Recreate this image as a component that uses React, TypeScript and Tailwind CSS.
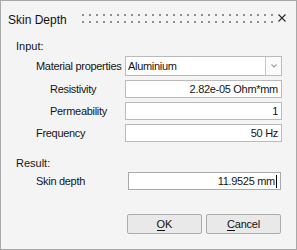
import React from 'react'

const font = "font-['Liberation_Sans',Arial,sans-serif]"

function GripDots() {
  const cols = Array.from({ length: 28 }, (_, i) => i)
  return (
    <svg width="191" height="9" viewBox="0 0 191 9" className="mt-[13px] ml-0 shrink-0">
      {cols.map((i) => (
        <g key={i} fill="#8e8e8e">
          <rect x={i * 7} y={0} width={2} height={2} />
          <rect x={i * 7} y={7} width={2} height={2} />
        </g>
      ))}
    </svg>
  )
}

function CloseIcon() {
  return (
    <svg width="8" height="8" viewBox="0 0 8 8" className="mt-[13px] ml-[5px] shrink-0">
      <path d="M0.5 0.5 L7.5 7.5 M7.5 0.5 L0.5 7.5" stroke="#2b2b2b" strokeWidth="1.1" fill="none" />
    </svg>
  )
}

function Field({ label, indent, value }: { label: string; indent: boolean; value: string }) {
  return (
    <div className="flex items-center h-[18px] mt-[4px]">
      <div className={`w-[109px] ${indent ? 'pl-[34px]' : 'pl-[20px]'} tracking-[-0.3px]`}>{label}</div>
      <div className="w-[157px] h-[18px] bg-white border border-[#bababa] flex items-center justify-end pr-[3px] tracking-[-0.3px]">
        {value}
      </div>
    </div>
  )
}

export default function App() {
  return (
    <div className={`w-[297px] h-[250px] border border-[#a8a8a8] bg-[#f4f4f4] flex flex-col text-[11px] leading-[14px] text-[#141414] ${font}`}>
      {/* title bar */}
      <div className="flex items-start h-[30px] pl-[7px]">
        <span className="w-[74px] mt-[12px] text-[12px] text-[#111]">Skin Depth</span>
        <GripDots />
        <CloseIcon />
      </div>

      <div className="pl-[15px] flex flex-col">
        <div className="mt-[8px] h-[14px]">Input:</div>

        {/* material select */}
        <div className="flex items-center h-[20px] mt-[3px]">
          <div className="w-[109px] pl-[20px] tracking-[-0.3px]">Material properties</div>
          <div className="w-[157px] h-[20px] bg-white border border-[#bababa] flex items-stretch">
            <div className="flex-1 flex items-center pl-[2px] tracking-[-0.3px]">Aluminium</div>
            <div className="w-[16px] border-l border-[#c8c8c8] bg-[#fbfbfb] flex items-center justify-center">
              <svg width="6" height="4" viewBox="0 0 6 4">
                <path d="M0.5 0.5 L3 3 L5.5 0.5" stroke="#a0a0a0" strokeWidth="1.2" fill="none" />
              </svg>
            </div>
          </div>
        </div>

        <Field label="Resistivity" indent value="2.82e-05 Ohm*mm" />
        <Field label="Permeability" indent value="1" />
        <Field label="Frequency" indent={false} value="50 Hz" />

        <div className="mt-[14px] h-[14px]">Result:</div>

        <div className="flex items-center h-[18px] mt-[2px]">
          <div className="w-[112px] pl-[20px] tracking-[-0.3px]">Skin depth</div>
          <div className="w-[153px] h-[18px] bg-white border border-[#a9a9a9] flex items-center justify-end pr-[3px] tracking-[-0.3px]">
            <span>11.9525 mm</span>
            <span className="w-px h-[13px] bg-black ml-[1px]" />
          </div>
        </div>
      </div>

      {/* buttons */}
      <div className="flex justify-end gap-[4px] pr-[15px] mt-[24px]">
        <button className="w-[75px] h-[20px] bg-[#e9e9e9] border border-[#adadad] rounded-[2px] text-[11px] text-[#111]">
          <u className="no-underline border-b border-[#111] leading-[11px] inline-block">O</u>K
        </button>
        <button className="w-[75px] h-[20px] bg-[#e9e9e9] border border-[#adadad] rounded-[2px] text-[11px] text-[#111] tracking-[-0.2px]">
          <u className="no-underline border-b border-[#111] leading-[11px] inline-block">C</u>ancel
        </button>
      </div>
    </div>
  )
}
